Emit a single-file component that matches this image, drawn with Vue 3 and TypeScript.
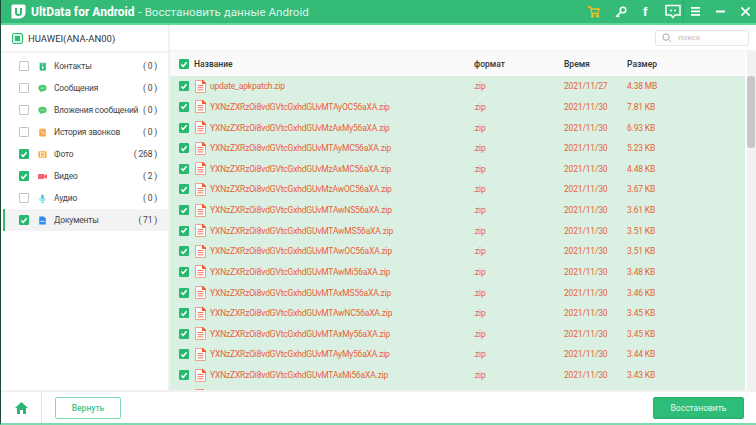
<script setup lang="ts">
interface Cat { name: string; count: number; checked: boolean; color: string; kind: string }
const cats: Cat[] = [
  { name: 'Контакты', count: 0, checked: false, color: '#2dbd74', kind: 'contact' },
  { name: 'Сообщения', count: 0, checked: false, color: '#4cc96b', kind: 'msg' },
  { name: 'Вложения сообщений', count: 0, checked: false, color: '#4cc96b', kind: 'msg' },
  { name: 'История звонков', count: 0, checked: false, color: '#f5a94c', kind: 'call' },
  { name: 'Фото', count: 268, checked: true, color: '#f7ae3f', kind: 'photo' },
  { name: 'Видео', count: 2, checked: true, color: '#f4606c', kind: 'video' },
  { name: 'Аудио', count: 0, checked: false, color: '#52d2e0', kind: 'audio' },
  { name: 'Документы', count: 71, checked: true, color: '#2f8df0', kind: 'doc' },
]
const prefix = 'YXNzZXRzOi8vdGVtcGxhdGUv'
const rows = [
  { n: 'update_apkpatch.zip', f: '.zip', d: '2021/11/27', s: '4.38 MB' },
  ...[
    ['MTAyOC56aXA', '7.81'], ['MzAxMy56aXA', '6.93'], ['MTAyMC56aXA', '5.23'], ['MzAxMC56aXA', '4.48'],
    ['MzAwOC56aXA', '3.67'], ['MTAwNS56aXA', '3.61'], ['MTAwMS56aXA', '3.51'], ['MTAwOC56aXA', '3.51'],
    ['MTAwMi56aXA', '3.48'], ['MTAxMS56aXA', '3.46'], ['MTAwNC56aXA', '3.45'], ['MTAxMy56aXA', '3.45'],
    ['MTAyMy56aXA', '3.44'], ['MTAxMi56aXA', '3.43'],
  ].map(([a, s]) => ({ n: prefix + a + '.zip', f: '.zip', d: '2021/11/30', s: s + ' KB' })),
  { n: '', f: '', d: '', s: '' },
]
</script>

<template>
  <div class="win">
    <header class="top">
      <svg class="logo" width="15" height="15" viewBox="0 0 15 15">
        <path d="M2 .5h11a1.500 1.500 0 0 1 1.500 1.500v6.500a6 6 0 0 1-6 6H.5V2A1.500 1.500 0 0 1 2 .5z" fill="#fff" />
        <path d="M5 4v4.500a2.500 2.500 0 0 0 5 0V4" fill="none" stroke="#35bb78" stroke-width="2" />
      </svg>
      <b class="brand">UltData for Android</b>
      <span class="sub">- Восстановить данные Android</span>
      <div class="spacer"></div>
      <svg class="i-cart" width="12" height="12" viewBox="0 0 12 12" fill="none" stroke="#f5c022" stroke-width="1.300">
        <path d="M0 1h2.500l1.500 6.500h6l1-4.500H3" /><circle cx="4.500" cy="10" r="1" fill="#f5c022" /><circle cx="9.500" cy="10" r="1" fill="#f5c022" />
      </svg>
      <svg class="i-key" width="12" height="12" viewBox="0 0 12 12" fill="none" stroke="#fff" stroke-width="1.500">
        <circle cx="8" cy="4" r="2.800" /><path d="M6 6L1 11M2.500 9.500L4 11" />
      </svg>
      <span class="fb">f</span>
      <svg class="i-chat" width="16" height="15" viewBox="0 0 16 15">
        <path d="M1 1.500h14v9.500h-5l-2 2.500L6 11H1z" fill="none" stroke="#fff" stroke-width="1.500" />
        <circle cx="6" cy="6.500" r="1" fill="#fff" /><circle cx="10" cy="6.500" r="1" fill="#fff" />
      </svg>
      <div class="divider"></div>
      <svg class="ic2" width="9" height="9" viewBox="0 0 9 9" fill="#fff">
        <rect y="0" width="9" height="1.800" /><rect y="3.500" width="9" height="1.800" /><rect y="7" width="9" height="1.800" />
      </svg>
      <svg class="ic2" width="9" height="9" viewBox="0 0 9 9" fill="#fff"><rect y="3.500" width="9" height="2" /></svg>
      <svg class="ic2 last" width="9" height="9" viewBox="0 0 9 9" fill="none" stroke="#fff" stroke-width="1.700">
        <path d="M.5.5l8 8M8.500.5l-8 8" />
      </svg>
    </header>

    <main class="body">
      <aside class="side">
        <div class="device">
          <span class="devbox"><i></i></span>
          <span>HUAWEI(ANA-AN00)</span>
        </div>
        <ul class="cats">
          <li v-for="c in cats" :key="c.name" :class="{ active: c.kind === 'doc' }">
            <span class="cb" :class="{ on: c.checked }">
              <svg v-if="c.checked" width="8" height="7" viewBox="0 0 9 8"><path d="M1.500 4l2 2L7.500 1.500" fill="none" stroke="#fff" stroke-width="1.800" /></svg>
            </span>
            <span class="caticon">
              <svg width="9" height="9" viewBox="0 0 11 11">
                <template v-if="c.kind === 'contact'">
                  <path d="M2 1h7.500v9.500H2z" :fill="c.color" /><rect x="4.500" y="2" width="2.500" height="1" fill="#fff" /><rect x="5" y="5" width="1.600" height="3.500" fill="#fff" />
                </template>
                <template v-else-if="c.kind === 'msg'">
                  <ellipse cx="5.500" cy="5" rx="5" ry="4" :fill="c.color" /><path d="M3 8l-.5 2L5 9z" :fill="c.color" /><rect x="3" y="4.500" width="5" height="1" fill="#fff" opacity=".7" />
                </template>
                <template v-else-if="c.kind === 'call'">
                  <rect x="1.500" y="1" width="8" height="9.500" rx="1" :fill="c.color" /><path d="M4 3.500l3.500 4" stroke="#fff" stroke-width="1.200" />
                </template>
                <template v-else-if="c.kind === 'photo'">
                  <rect x="0.500" y="1.500" width="10" height="8" rx="1" :fill="c.color" /><rect x="3" y="3.500" width="5" height="4" fill="none" stroke="#fff" />
                </template>
                <template v-else-if="c.kind === 'video'">
                  <rect x="0" y="2.500" width="7.500" height="6" :fill="c.color" /><path d="M7.500 4.500L11 2.500v6L7.500 6.500z" :fill="c.color" />
                </template>
                <template v-else-if="c.kind === 'audio'">
                  <rect x="3.500" y="0.500" width="4" height="6.500" rx="2" :fill="c.color" /><path d="M2 5a3.500 3.500 0 0 0 7 0M5.500 8.500v2M3.500 10.500h4" fill="none" :stroke="c.color" />
                </template>
                <template v-else>
                  <path d="M1.500 0.500h5.500l2.500 2.500v7.500h-8z" :fill="c.color" /><rect x="3" y="6" width="5" height="1" fill="#fff" />
                </template>
              </svg>
            </span>
            <span class="catname">{{ c.name }}</span>
            <span class="count">( {{ c.count }} )</span>
          </li>
        </ul>
      </aside>

      <section class="content">
        <div class="toolbar">
          <div class="search">
            <svg width="10" height="10" viewBox="0 0 11 11" fill="none" stroke="#a8a8a8" stroke-width="1.100"><circle cx="4.500" cy="4.500" r="3.500" /><path d="M7 7l3 3" /></svg>
            <span>поиск</span>
          </div>
        </div>
        <div class="tablewrap">
          <div class="table">
            <div class="thead">
              <span class="c-cb"><span class="cb on"><svg width="8" height="7" viewBox="0 0 9 8"><path d="M1.500 4l2 2L7.500 1.500" fill="none" stroke="#fff" stroke-width="1.800" /></svg></span></span>
              <span class="c-name">Название</span>
              <span class="c-fmt">формат</span>
              <span class="c-date">Время</span>
              <span class="c-size">Размер</span>
            </div>
            <div class="tbody">
              <div v-for="(r, i) in rows" :key="i" class="row">
                <span class="c-cb"><span class="cb on"><svg width="8" height="7" viewBox="0 0 9 8"><path d="M1.500 4l2 2L7.500 1.500" fill="none" stroke="#fff" stroke-width="1.800" /></svg></span></span>
                <svg class="file" width="11" height="13" viewBox="0 0 11 13">
                  <path d="M.5.5h7l3 3v9H.5z" fill="#fff" stroke="#f0a18a" />
                  <path d="M7 0h1l3 3v1H7z" fill="#ee5a32" />
                  <path d="M2.500 5.500h6M2.500 7.700h6M2.500 9.900h6" stroke="#f0775a" stroke-width="1" />
                </svg>
                <span class="fname">{{ r.n }}</span>
                <span class="c-fmt">{{ r.f }}</span>
                <span class="c-date">{{ r.d }}</span>
                <span class="c-size">{{ r.s }}</span>
              </div>
            </div>
          </div>
          <div class="scroll"><div class="thumb"></div></div>
        </div>
      </section>
    </main>

    <footer class="foot">
      <div class="home">
        <svg width="13" height="12" viewBox="0 0 13 12" fill="#2bb673"><path d="M6.500 0L13 6h-2v6H8V8H5v4H2V6H0z" /></svg>
      </div>
      <button class="back">Вернуть</button>
      <div class="spacer"></div>
      <button class="restore">Восстановить</button>
    </footer>
  </div>
</template>

<style>
html, body { margin: 0; padding: 0; overflow: hidden; background: #fff; }
</style>

<style scoped>
.win { width: 756px; height: 425px; display: flex; flex-direction: column; overflow: hidden; font-family: Roboto, "Noto Sans", sans-serif; font-size: 8.500px; color: #333; background: #fff; border-bottom: 2px solid #7ddcae; border-left: 1px solid #1c4a36; box-sizing: border-box; }
.top { height: 25px; flex: none; box-sizing: border-box; background: #35bb78; border-bottom: 2px solid #5fd89c; display: flex; align-items: center; color: #fff; padding-left: 10px; }
.logo { margin-right: 5px; }
.brand { font-size: 12px; font-weight: 700; margin-right: 4px; }
.sub { font-size: 11.600px; color: #dff5ea; }
.spacer { flex: 1; }
.i-cart { margin-right: 15px; }
.i-key { margin-right: 16px; }
.fb { font-family: "Liberation Sans", sans-serif; font-weight: 700; font-size: 13px; width: 8px; margin-right: 14px; }
.divider { width: 1px; height: 23px; background: #2fa86b; margin-left: 2px; margin-right: 7px; }
.ic2 { margin-right: 16px; }
.ic2.last { margin-right: 6px; }
.body { flex: 1; display: flex; min-height: 0; }
.side { width: 167px; flex: none; border-right: 2px solid #f1f1f1; }
.device { height: 26px; display: flex; align-items: center; gap: 5px; padding-left: 11px; font-size: 9.500px; border-bottom: 2px solid #f3f3f3; }
.devbox { width: 9px; height: 9px; border: 1px solid #2dbd74; border-radius: 2px; background: #d8f3e5; display: flex; align-items: center; justify-content: center; }
.devbox i { width: 5px; height: 5px; background: #2dbd74; }
.cats { list-style: none; margin: 0; padding: 2px 0 0; }
.cats li { height: 22px; display: flex; align-items: center; padding-right: 11px; box-sizing: border-box; margin-left: 2px; padding-left: 16px; letter-spacing: -0.180px; }
.cats li.active { background: #f3f3f3; border-left: 2px solid #2dbd74; padding-left: 14px; }
.cb { width: 10px; height: 10px; flex: none; box-sizing: border-box; border: 1px solid #c4c4c4; border-radius: 1px; display: inline-flex; align-items: center; justify-content: center; background: #fff; }
.cb.on { background: #27b96f; border-color: #27b96f; }
.caticon { width: 9px; margin-left: 9px; display: flex; }
.catname { margin-left: 7px; flex: 1; white-space: nowrap; color: #444; }
.count { white-space: nowrap; color: #444; }
.content { flex: 1; min-width: 0; display: flex; flex-direction: column; }
.toolbar { height: 27px; flex: none; display: flex; align-items: center; justify-content: flex-end; padding-right: 7px; box-sizing: border-box; border-bottom: 2px solid #f5f5f5; }
.search { width: 94px; height: 16px; border: 1px solid #e8e8e8; border-radius: 2px; display: flex; align-items: center; gap: 6px; padding-left: 6px; box-sizing: border-box; color: #bbb; font-size: 8px; }
.tablewrap { flex: 1; display: flex; min-height: 0; }
.table { width: 575px; flex: none; overflow: hidden; display: flex; flex-direction: column; }
.thead { height: 24px; flex: none; background: #fafafa; display: flex; align-items: center; color: #333; font-weight: 500; }
.tbody { flex: 1; overflow: hidden; background: #daf0e3; }
.row { height: 20.640px; display: flex; align-items: center; color: #ea6038; letter-spacing: -0.180px; }
.c-cb { width: 24px; flex: none; padding-left: 9px; box-sizing: border-box; display: flex; }
.file { flex: none; margin-left: 1px; margin-right: 4px; }
.thead .c-name { width: 280px; }
.fname { width: 264px; flex: none; white-space: nowrap; }
.row .c-fmt { width: 90px; margin-left: -1px; margin-right: 1px; }
.c-fmt { width: 90px; flex: none; }
.c-date { width: 63px; flex: none; }
.c-size { flex: 1; }
.scroll { flex: 1; background: #f1f1f1; margin-left: 2px; padding-top: 24px; }
.thumb { height: 72px; width: 8px; background: #c6c6c6; border-radius: 3px; }
.foot { height: 33px; flex: none; display: flex; align-items: center; border-top: 2px solid #f1f1f1; box-sizing: border-box; }
.home { width: 41px; height: 100%; display: flex; align-items: center; justify-content: center; border-right: 1px solid #e4e4e4; box-sizing: border-box; }
.back { margin-left: 13px; width: 66px; height: 22px; background: #fff; border: 1px solid #7ddcae; border-radius: 2px; color: #49c487; font: 500 8.500px Roboto, sans-serif; }
.restore { width: 91px; height: 22px; margin-right: 12px; background: #2dbd78; border: 1px solid #28ad6d; border-radius: 2px; color: #e8f9f0; font: 8.500px Roboto, sans-serif; }
</style>
